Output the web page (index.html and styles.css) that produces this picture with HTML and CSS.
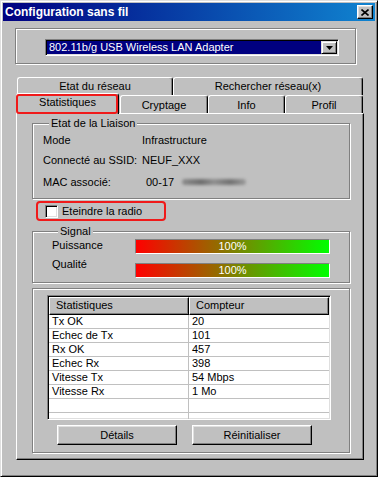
FILE: index.html
```html
<!DOCTYPE html>
<html lang="fr">
<head>
  <meta charset="UTF-8" />
  <title>Configuration sans fil</title>
  <link rel="stylesheet" href="styles.css">
</head>
<body>
  <div class="window">
    <div class="titlebar">
      <span class="title">Configuration sans fil</span>
      <button class="close-btn">
        <svg width="8" height="7" viewBox="0 0 8 7"><path d="M0.5 0.5 L7.5 6.5 M7.5 0.5 L0.5 6.5" stroke="#000" stroke-width="1.6" fill="none"/></svg>
      </button>
    </div>

    <div class="body">
      <div class="group adapter-group">
        <div class="combo">
          <div class="combo-value">802.11b/g USB Wireless LAN Adapter</div>
          <div class="combo-btn">
            <svg width="7" height="4" viewBox="0 0 7 4"><path d="M0 0h7L3.5 4z" fill="#000"/></svg>
          </div>
        </div>
      </div>

      <div class="tabs">
        <div class="tab-row back">
          <div class="tab tab-etat">Etat du réseau</div>
          <div class="tab tab-search">Rechercher réseau(x)</div>
        </div>
        <div class="tab-row front">
          <div class="tab tab-stats active">Statistiques</div>
          <div class="tab tab-crypt">Cryptage</div>
          <div class="tab tab-info">Info</div>
          <div class="tab tab-profil">Profil</div>
        </div>
      </div>

      <div class="panel">
        <div class="group liaison">
          <div class="group-title">Etat de la Liaison</div>
          <div class="info-grid">
            <span>Mode</span><span>Infrastructure</span>
            <span>Connecté au SSID:</span><span>NEUF_XXX</span>
            <span>MAC associé:</span><span class="mac">00-17<span class="blurred"></span></span>
          </div>
        </div>

        <div class="check-row">
          <span class="checkbox"></span>
          <span>Eteindre la radio</span>
        </div>

        <div class="group signal">
          <div class="group-title">Signal</div>
          <div class="signal-row">
            <span class="signal-label">Puissance</span>
            <div class="bar">100%</div>
          </div>
          <div class="signal-row quality">
            <span class="signal-label">Qualité</span>
            <div class="bar">100%</div>
          </div>
        </div>

        <div class="group stats">
          <div class="listview">
            <div class="lv-head">
              <div class="lv-hcell">Statistiques</div>
              <div class="lv-hcell">Compteur</div>
            </div>
            <div class="lv-row"><span>Tx OK</span><span>20</span></div>
            <div class="lv-row"><span>Echec de Tx</span><span>101</span></div>
            <div class="lv-row"><span>Rx OK</span><span>457</span></div>
            <div class="lv-row"><span>Echec Rx</span><span>398</span></div>
            <div class="lv-row"><span>Vitesse Tx</span><span>54 Mbps</span></div>
            <div class="lv-row"><span>Vitesse Rx</span><span>1 Mo</span></div>
            <div class="lv-row"><span></span><span></span></div>
            <div class="lv-row"><span></span><span></span></div>
          </div>
          <div class="buttons">
            <button class="btn">Détails</button>
            <button class="btn">Réinitialiser</button>
          </div>
        </div>
      </div>
    </div>
  </div>
</body>
</html>
```

FILE: styles.css
```css
body {
  margin: 0;
  font-family: 'Liberation Sans', Arial, sans-serif;
  font-size: 11px;
  color: #000;
  background-color: #c0c0c0;
}
.window {
  width: 378px;
  height: 477px;
  box-sizing: border-box;
  background-color: #c0c0c0;
  border: 1px solid;
  border-color: #dfdfdf #000 #000 #dfdfdf;
  box-shadow: inset 1px 1px #fff, inset -1px -1px #808080;
  padding: 2px;
}
.titlebar {
  height: 18px;
  display: flex;
  align-items: center;
  padding: 0 2px;
  background: linear-gradient(to right, #000080, #1084d0);
  color: #fff;
  font-weight: bold;
  font-size: 12px;
}
.title {
  flex: 1;
  line-height: 14px;
}
.close-btn {
  width: 16px;
  height: 14px;
  box-sizing: border-box;
  padding: 0;
  background-color: #c0c0c0;
  border: 1px solid;
  border-color: #fff #000 #000 #fff;
  box-shadow: inset -1px -1px #808080, inset 1px 1px #dfdfdf;
  display: flex;
  align-items: center;
  justify-content: center;
}
.body {
  padding: 7px 0 0 12px;
}

/* etched group boxes */
.group {
  box-sizing: border-box;
  border: 1px solid #808080;
  box-shadow: inset 1px 1px #fff, 1px 1px #fff;
}
.group-title {
  display: table;
  margin: -7px 0 0 6px;
  padding: 0 2px;
  background-color: #c0c0c0;
  line-height: 13px;
}
.adapter-group {
  width: 341px;
  height: 36px;
  padding: 10px 0 0 29px;
}
.combo {
  width: 294px;
  height: 17px;
  box-sizing: border-box;
  display: flex;
  padding: 1px;
  background-color: #fff;
  border: 1px solid;
  border-color: #808080 #fff #fff #808080;
  box-shadow: inset 1px 1px #000, inset -1px -1px #dfdfdf;
}
.combo-value {
  flex: 1;
  background-color: #000080;
  color: #fff;
  line-height: 13px;
  padding-left: 2px;
}
.combo-btn {
  width: 16px;
  height: 13px;
  box-sizing: border-box;
  background-color: #c0c0c0;
  border: 1px solid;
  border-color: #dfdfdf #000 #000 #dfdfdf;
  box-shadow: inset 1px 1px #fff, inset -1px -1px #808080;
  display: flex;
  align-items: center;
  justify-content: center;
}

/* tabs */
.tabs {
  margin-top: 13px;
}
.tab-row {
  display: flex;
  align-items: flex-start;
  height: 18px;
}
.tab-row.back {
  margin-left: 2px;
}
.tab-row.front {
  margin-left: 3px;
}
.tab {
  box-sizing: border-box;
  height: 18px;
  border-top: 1px solid #fff;
  border-left: 1px solid #fff;
  border-right: 1px solid #000;
  border-radius: 3px 3px 0 0;
  box-shadow: inset -1px 0 #808080;
  background-color: #c0c0c0;
  text-align: center;
  line-height: 17px;
}
.tab-etat { width: 156px; }
.tab-search { width: 190px; }
.tab-crypt { width: 88px; line-height: 18px; }
.tab-info { width: 77px; line-height: 18px; }
.tab-profil { width: 78px; line-height: 18px; }
.tab.active {
  width: 103px;
  height: 21px;
  margin: -2px 1px 0 -2px;
  position: relative;
  z-index: 1;
  line-height: 17px;
}
.tab.active::after {
  content: '';
  position: absolute;
  top: 0;
  left: -1px;
  right: 0;
  bottom: 0;
  border: 2px solid #f01a1a;
  border-radius: 3px;
}

.panel {
  margin-left: 1px;
  width: 348px;
  height: 347px;
  box-sizing: border-box;
  border-top: 1px solid #fff;
  border-left: 1px solid #fff;
  border-right: 1px solid #000;
  border-bottom: 1px solid #000;
  box-shadow: inset -1px -1px #808080;
  padding: 9px 0 0 15px;
}
.liaison {
  width: 318px;
  padding: 0 0 4px 10px;
}
.info-grid {
  display: grid;
  grid-template-columns: 99px auto;
  grid-template-rows: 20px 20px 24px;
  align-items: center;
  line-height: 13px;
}
.mac {
  padding-left: 4px;
  display: flex;
  align-items: center;
}
.blurred {
  display: inline-block;
  width: 64px;
  height: 6px;
  margin-left: 8px;
  border-radius: 3px;
  background: linear-gradient(to right, #8c8c8c, #6e6e6e 30%, #909090 50%, #727272 75%, #9a9a9a);
  filter: blur(1.5px);
}

.check-row {
  width: 130px;
  height: 20px;
  box-sizing: border-box;
  margin: 2px 0 0 4px;
  padding-left: 7px;
  border: 2px solid #f01a1a;
  border-radius: 4px;
  display: flex;
  align-items: center;
  gap: 4px;
}
.checkbox {
  width: 13px;
  height: 13px;
  box-sizing: border-box;
  background-color: #fff;
  border: 1px solid;
  border-color: #808080 #fff #fff #808080;
  box-shadow: inset 1px 1px #000, inset -1px -1px #dfdfdf;
}

.signal {
  width: 318px;
  margin-top: 10px;
  padding: 0 0 4px 19px;
}
.signal-row {
  display: flex;
  align-items: flex-start;
  margin-top: 1px;
}
.signal-row.quality {
  margin-top: 9px;
}
.signal-label {
  width: 83px;
  line-height: 13px;
}
.signal-row.quality .signal-label {
  margin-top: -5px;
}
.bar {
  width: 195px;
  height: 15px;
  box-sizing: border-box;
  border: 1px solid;
  border-color: #808080 #fff #fff #808080;
  background: linear-gradient(to right, #ff0000, #00ff00);
  color: #fff;
  text-align: center;
  line-height: 13px;
}

.stats {
  width: 318px;
  margin-top: 5px;
  padding: 6px 0 7px 14px;
}
.listview {
  width: 284px;
  height: 125px;
  box-sizing: border-box;
  overflow: hidden;
  background-color: #fff;
  border: 1px solid;
  border-color: #808080 #fff #fff #808080;
  box-shadow: inset 1px 1px #000, inset -1px -1px #dfdfdf;
  padding: 1px;
}
.lv-head {
  display: grid;
  grid-template-columns: 140px 1fr;
  height: 18px;
}
.lv-hcell {
  box-sizing: border-box;
  background-color: #c0c0c0;
  border: 1px solid;
  border-color: #fff #000 #000 #fff;
  box-shadow: inset -1px -1px #808080;
  padding-left: 6px;
  line-height: 15px;
}
.lv-row {
  display: grid;
  grid-template-columns: 140px 1fr;
  height: 14px;
  box-sizing: border-box;
  border-bottom: 1px solid #c0c0c0;
  line-height: 13px;
}
.lv-row span {
  padding-left: 3px;
}
.lv-row span:first-child {
  border-right: 1px solid #c0c0c0;
}
.buttons {
  display: flex;
  gap: 15px;
  margin: 5px 0 0 10px;
}
.btn {
  width: 120px;
  height: 20px;
  box-sizing: border-box;
  padding: 0;
  font: inherit;
  color: #000;
  background-color: #c0c0c0;
  border: 1px solid;
  border-color: #fff #000 #000 #fff;
  box-shadow: inset -1px -1px #808080, inset 1px 1px #dfdfdf;
}
```
